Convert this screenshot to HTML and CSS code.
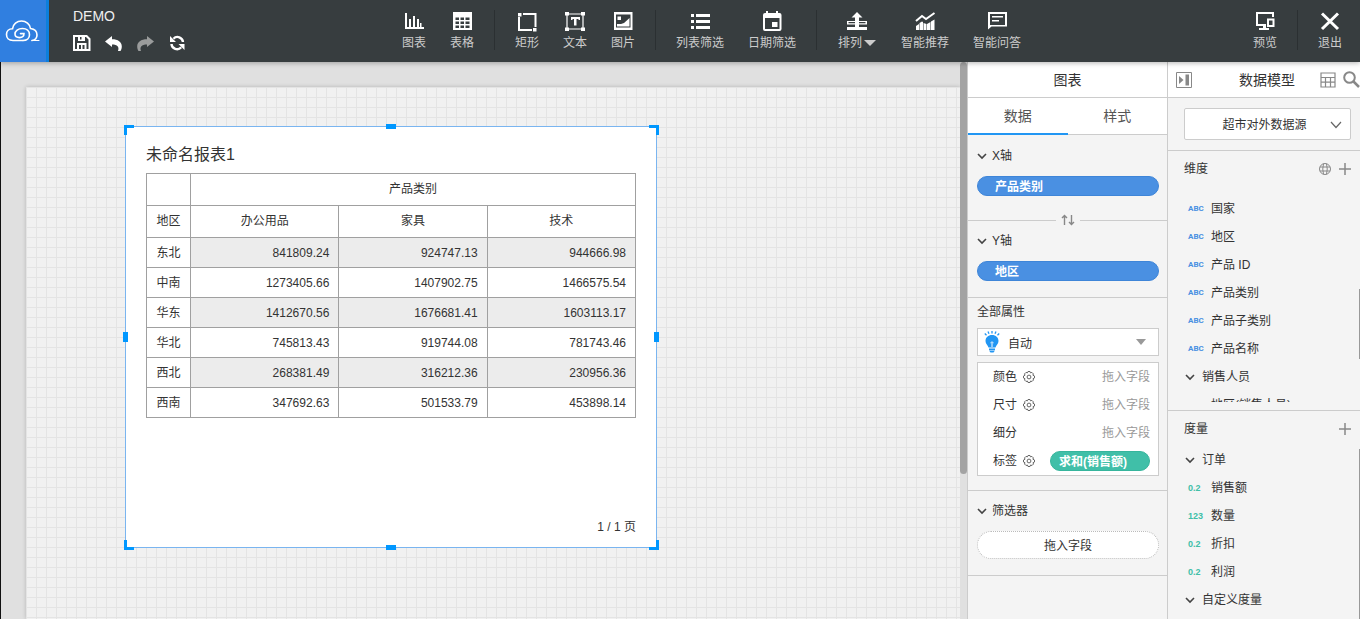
FILE: index.html
```html
<!DOCTYPE html>
<html lang="zh-CN">
<head>
    <meta charset="UTF-8">
    <meta name="viewport" content="width=device-width, initial-scale=1.0">
    <title>DEMO</title>
    <link rel="stylesheet" href="styles.css">
</head>
<body>
    <header class="topbar">
        <a class="logo" href="#" aria-label="Home">
            <svg width="35" height="22" viewBox="0 0 35 22" fill="none" stroke="#fff" stroke-width="1.6" stroke-linecap="round">
                <path d="M18 20.500H8C3.500 20.500 1.500 17.500 1.500 14.500 1.500 11 4 8.800 7.500 8.800 8 4 12 1 16.500 1S25 4 25.500 8.500C29.500 9 32 11.500 32 15c0 3-2 5-5 5.500"/>
                <path stroke-width="1" d="M27 20.500h7"/>
                <path d="M18 20.500c4 0 6.500-2.500 6.500-5.700 0-3.800-3-6.300-7-6.300-4.500 0-7.500 2.500-7.500 5.500 0 2.500 2 3.600 4.500 3.600 2.700 0 4.500-1.300 4.500-4h-3.500"/>
            </svg>
        </a>
        <div class="project">
            <h1>DEMO</h1>
            <div class="history">
                <button type="button" aria-label="保存">
                    <svg width="18" height="18" viewBox="0 0 18 18"><path fill="#fff" fill-rule="evenodd" d="M0 1h14l3.500 3.500V17H0zM2 3v12h2V9h9.500v6h2V5.500L13 3h-1v4H5V3zM7 3v2.500h1.500V3zM6 11v4h2v-4zM9.500 11v4h2v-4z"/></svg>
                </button>
                <button type="button" aria-label="撤销">
                    <svg width="18" height="18" viewBox="0 0 18 18"><path fill="#fff" d="M0 7.500L7 2v3.300c6 0 9.800 2.700 9.800 7.200 0 1.800-.5 3.200-1.300 4.500h-2.500c1.500-4-.5-6.500-6-6.500V13z"/></svg>
                </button>
                <button type="button" aria-label="重做" disabled>
                    <svg width="18" height="18" viewBox="0 0 18 18"><path fill="#9a9c9c" d="M17 7.500L10 2v3.300C4 5.300.2 8 .2 12.500c0 1.800.5 3.200 1.300 4.500H4c-1.500-4 .5-6.500 6-6.500V13z"/></svg>
                </button>
                <button type="button" aria-label="刷新">
                    <svg width="18" height="18" viewBox="0 0 18 18"><g fill="none" stroke="#fff" stroke-width="2.400"><path d="M14 8A5.500 5.500 0 0 0 4.500 4.700"/><path d="M2.500 10a5.500 5.500 0 0 0 9.700 3.300"/></g><path fill="#fff" d="M1 2v6h6zM15.500 16v-6h-6z"/></svg>
                </button>
            </div>
        </div>
        <nav class="tools">
            <button type="button" class="tool">
                <svg width="20" height="20" viewBox="0 0 20 20"><path fill="#fff" d="M1 1h2v14h17v2H1zM5 7h2v8H5zM9 4h2v11H9zM13 7h2v8h-2zM16 11h1.500v4H16z"/></svg>
                <span>图表</span>
            </button>
            <button type="button" class="tool">
                <svg width="20" height="20" viewBox="0 0 20 20"><path fill="#fff" fill-rule="evenodd" d="M1 0h19v18H1zM3.500 5.500v2.500h3.500V5.500zM8.500 5.500v2.500H12V5.500zM13.500 5.500v2.500H17.500V5.500zM3.500 9.500V12H7V9.500zM8.500 9.500V12H12V9.500zM13.500 9.500V12h4V9.500zM3.500 13.500V16H7v-2.500zM8.500 13.500V16H12v-2.500zM13.500 13.500V16h4v-2.500z"/></svg>
                <span>表格</span>
            </button>
            <i class="sep"></i>
            <button type="button" class="tool">
                <svg width="20" height="20" viewBox="0 0 20 20"><path fill="none" stroke="#fff" stroke-width="2" d="M6 2h12.500v13M2 5v13h13"/><path fill="#fff" d="M1 1h3.500v3.500H1zM16 16h3.500v3.500H16z"/></svg>
                <span>矩形</span>
            </button>
            <button type="button" class="tool">
                <svg width="22" height="20" viewBox="0 0 22 20"><path fill="none" stroke="#fff" stroke-width="1.200" d="M3 2h16v15H3z"/><path fill="#fff" d="M1 0h4v3.500H1zM17 0h4v3.500h-4zM1 15.500h4V19H1zM17 15.500h4V19h-4zM7 5h9v3h-1.500V7h-2v6.500h-2.500V7H8.500v1H7z"/></svg>
                <span>文本</span>
            </button>
            <button type="button" class="tool">
                <svg width="20" height="20" viewBox="0 0 20 20"><path fill="#fff" fill-rule="evenodd" d="M1 0h18.500v18H1zM3 2.500v13h14.500v-13zM4.500 4.500H8V8H4.500zM4 14.500V12h4l3-1 5.500-5v8.500z"/></svg>
                <span>图片</span>
            </button>
            <i class="sep"></i>
            <button type="button" class="tool">
                <svg width="20" height="20" viewBox="0 0 20 20"><path fill="#fff" d="M1 2h3v3H1zM6 2h14v3H6zM1 8h3v3H1zM6 8h14v3H6zM1 14h3v3H1zM6 14h14v3H6z"/></svg>
                <span>列表筛选</span>
            </button>
            <button type="button" class="tool">
                <svg width="20" height="20" viewBox="0 0 20 20"><path fill="#fff" fill-rule="evenodd" d="M4-1h2v2h8v-2h2v2h1.500q2 0 2 2v14q0 2-2 2H3q-2 0-2-2V3q0-2 2-2h1zM3 6v11h14.500V6zM10 10h5.500v5H10z"/></svg>
                <span>日期筛选</span>
            </button>
            <i class="sep"></i>
            <button type="button" class="tool tool-arrange">
                <svg width="22" height="20" viewBox="0 0 22 20"><path fill="#fff" fill-rule="evenodd" d="M11 0l5.500 5.500H13V9h8v3.500h-8V15h8v3H1v-3h8v-2.500H1V9h8V5.500H5.500zM2.500 10v1.200H9V10zM13 10v1.200h6.500V10z"/></svg>
                <span>排列<i class="caret"></i></span>
            </button>
            <button type="button" class="tool">
                <svg width="20" height="20" viewBox="0 0 20 20"><path fill="none" stroke="#fff" stroke-width="2" d="M1 9l6-5 4 3 8.500-6"/><path fill="#fff" d="M1 18v-4l3-2v6zM4.500 18v-7l2.500-1.500 1 .5v8zM8.500 18v-7l3 1V18zM12 18v-6L15.500 10v8zM16 18V9.500L19.500 7.500V18z"/></svg>
                <span>智能推荐</span>
            </button>
            <button type="button" class="tool">
                <svg width="20" height="20" viewBox="0 0 20 20"><path fill="#fff" fill-rule="evenodd" d="M1 0h19v14.500H4.500L1 17.500zM3 2v11h15V2zM5 4h11v1.600H5zM5 8h7v1.600H5z"/></svg>
                <span>智能问答</span>
            </button>
        </nav>
        <div class="actions">
            <button type="button" class="tool">
                <svg width="20" height="20" viewBox="0 0 20 20"><path fill="none" stroke="#fff" stroke-width="2" d="M18 5V1H2v12h9"/><path fill="#fff" fill-rule="evenodd" d="M12 6.500h7.500V15H12zM14 8.500V13h3.500V8.500zM8 14h3v2h3v2H4v-2h4z"/></svg>
                <span>预览</span>
            </button>
            <i class="sep"></i>
            <button type="button" class="tool">
                <svg width="20" height="20" viewBox="0 0 20 20"><path fill="none" stroke="#fff" stroke-width="3" d="M2 1.500l16 15.500M18 1.500L2 17"/></svg>
                <span>退出</span>
            </button>
        </div>
    </header>

    <main class="editor">
        <section class="workspace">
            <div class="board">
                <div class="widget">
                    <i class="handle corner nw"></i><i class="handle n"></i><i class="handle corner ne"></i>
                    <i class="handle w"></i><i class="handle e"></i>
                    <i class="handle corner sw"></i><i class="handle s"></i><i class="handle corner se"></i>
                    <h2>未命名报表1</h2>
                    <table>
                        <colgroup><col class="col-region"><col><col><col></colgroup>
                        <thead>
                            <tr><th></th><th colspan="3">产品类别</th></tr>
                            <tr><th>地区</th><th>办公用品</th><th>家具</th><th>技术</th></tr>
                        </thead>
                        <tbody>
                            <tr><th>东北</th><td>841809.24</td><td>924747.13</td><td>944666.98</td></tr>
                            <tr><th>中南</th><td>1273405.66</td><td>1407902.75</td><td>1466575.54</td></tr>
                            <tr><th>华东</th><td>1412670.56</td><td>1676681.41</td><td>1603113.17</td></tr>
                            <tr><th>华北</th><td>745813.43</td><td>919744.08</td><td>781743.46</td></tr>
                            <tr><th>西北</th><td>268381.49</td><td>316212.36</td><td>230956.36</td></tr>
                            <tr><th>西南</th><td>347692.63</td><td>501533.79</td><td>453898.14</td></tr>
                        </tbody>
                    </table>
                    <p class="pager">1 / 1 页</p>
                </div>
            </div>
        </section>
        <div class="scrollbar"><i></i></div>

        <aside class="panel chart-panel">
            <h2 class="panel-title">图表</h2>
            <div class="tabs">
                <button type="button" class="tab active">数据</button>
                <button type="button" class="tab">样式</button>
            </div>
            <section class="axis">
                <button type="button" class="fold"><svg width="10" height="8" viewBox="0 0 10 8"><path d="M1 2l4 4 4-4"/></svg>X轴</button>
                <button type="button" class="pill">产品类别</button>
            </section>
            <div class="swap">
                <button type="button" aria-label="交换"><svg width="14" height="12" viewBox="0 0 14 12"><path fill="none" stroke="#888" stroke-width="1.400" d="M3.500 11V1.500M1 4l2.500-2.500L6 4M10.500 1v9.500M8 8l2.500 2.500L13 8"/></svg></button>
            </div>
            <section class="axis axis-y">
                <button type="button" class="fold"><svg width="10" height="8" viewBox="0 0 10 8"><path d="M1 2l4 4 4-4"/></svg>Y轴</button>
                <button type="button" class="pill">地区</button>
            </section>
            <section class="attributes">
                <label for="mark">全部属性</label>
                <div class="mark-box">
                    <svg class="bulb" width="16" height="22" viewBox="0 0 16 22"><path fill="#2196f3" d="M8 4c3.800 0 6.500 2.400 6.500 6 0 3-2.500 4.200-3 6.500h-7C4 14.200 1.500 13 1.500 10c0-3.600 2.700-6 6.500-6zM5 17.500h6V19H5zM5 19.500h6L9.500 21.500h-3z"/><path stroke="#2196f3" stroke-width="1.300" d="M8 0v2.500M4 .5l1 2.300M12 .5l-1 2.300M.8 2.500l1.700 1.700M15.200 2.500l-1.700 1.700"/><path fill="none" stroke="#fff" stroke-width="1" d="M8 16v-3.500M7.200 12.500a1 1 0 1 1 1.600 0"/></svg>
                    <select id="mark"><option>自动</option></select>
                </div>
                <ul class="channels">
                    <li>颜色<button type="button" class="gear" aria-label="设置"><svg width="12" height="12" viewBox="0 0 12 12"><use href="#gear"/></svg></button><span>拖入字段</span></li>
                    <li>尺寸<button type="button" class="gear" aria-label="设置"><svg width="12" height="12" viewBox="0 0 12 12"><use href="#gear"/></svg></button><span>拖入字段</span></li>
                    <li>细分<span>拖入字段</span></li>
                    <li>标签<button type="button" class="gear" aria-label="设置"><svg width="12" height="12" viewBox="0 0 12 12"><use href="#gear"/></svg></button><button type="button" class="pill pill-measure">求和(销售额)</button></li>
                </ul>
            </section>
            <section class="filters">
                <button type="button" class="fold"><svg width="10" height="8" viewBox="0 0 10 8"><path d="M1 2l4 4 4-4"/></svg>筛选器</button>
                <div class="drop">拖入字段</div>
            </section>
        </aside>

        <aside class="panel model-panel">
            <div class="panel-title model-title">
                <button type="button" aria-label="收起"><svg width="16" height="16" viewBox="0 0 16 16"><path fill="none" stroke="#888" d="M.5.5h15v15H.5z"/><path fill="#888" d="M3 4l4.500 4L3 12zM9.500 2.500H13v11H9.500z"/></svg></button>
                <h2>数据模型</h2>
                <button type="button" aria-label="表格"><svg width="16" height="16" viewBox="0 0 16 16"><path fill="none" stroke="#888" stroke-width="1.200" d="M1 1h14v14H1zM1 5.500h14M1 10.200h14M5.500 5.500V15M10.500 5.500V15"/></svg></button>
                <button type="button" aria-label="搜索"><svg width="17" height="17" viewBox="0 0 17 17"><circle cx="6.500" cy="6.500" r="5.300" fill="none" stroke="#888" stroke-width="2"/><path stroke="#888" stroke-width="2.500" d="M10.500 10.500l5.500 5.500"/></svg></button>
            </div>
            <div class="source">
                <select aria-label="数据源"><option>超市对外数据源</option></select>
                <svg width="12" height="8" viewBox="0 0 12 8"><path fill="none" stroke="#666" stroke-width="1.200" d="M1 1l5 5.500L11 1"/></svg>
            </div>
            <section class="fields dimensions">
                <header>
                    <h3>维度</h3>
                    <button type="button" aria-label="地理"><svg width="12" height="12" viewBox="0 0 12 12" fill="none" stroke="#888"><circle cx="6" cy="6" r="5.500"/><path d="M4.500.8q-1.500 5.200 0 10.400M7.500.8q1.500 5.200 0 10.400M1 4h10M1 8h10"/></svg></button>
                    <button type="button" aria-label="添加"><svg width="12" height="12" viewBox="0 0 12 12"><path stroke="#888" stroke-width="1.500" d="M6 0v12M0 6h12"/></svg></button>
                </header>
                <ul>
                    <li><b>ABC</b>国家</li>
                    <li><b>ABC</b>地区</li>
                    <li><b>ABC</b>产品 ID</li>
                    <li><b>ABC</b>产品类别</li>
                    <li><b>ABC</b>产品子类别</li>
                    <li><b>ABC</b>产品名称</li>
                    <li><button type="button" class="fold"><svg width="10" height="8" viewBox="0 0 10 8"><path d="M1 2l4 4 4-4"/></svg>销售人员</button></li>
                    <li><b>ABC</b>地区(销售人员)</li>
                </ul>
            </section>
            <section class="fields measures">
                <header>
                    <h3>度量</h3>
                    <button type="button" aria-label="添加"><svg width="12" height="12" viewBox="0 0 12 12"><path stroke="#888" stroke-width="1.500" d="M6 0v12M0 6h12"/></svg></button>
                </header>
                <ul>
                    <li><button type="button" class="fold"><svg width="10" height="8" viewBox="0 0 10 8"><path d="M1 2l4 4 4-4"/></svg>订单</button></li>
                    <li><b>0.2</b>销售额</li>
                    <li><b>123</b>数量</li>
                    <li><b>0.2</b>折扣</li>
                    <li><b>0.2</b>利润</li>
                    <li><button type="button" class="fold"><svg width="10" height="8" viewBox="0 0 10 8"><path d="M1 2l4 4 4-4"/></svg>自定义度量</button></li>
                </ul>
            </section>
        </aside>
    </main>

    <svg class="defs" width="0" height="0" aria-hidden="true">
        <defs>
            <g id="gear" fill="none" stroke="#666">
                <path d="M5 .5h2l.5 1.400 1.400-.5 1.500 1.500-.5 1.300L11.500 5v2l-1.500.7.5 1.300-1.500 1.500-1.400-.5L7 11.500H5l-.6-1.500-1.400.5L1.500 9 2 7.700.5 7V5L2 4.200 1.500 2.900 3 1.400l1.400.5z"/>
                <circle cx="6" cy="6" r="1.900"/>
            </g>
        </defs>
    </svg>
</body>
</html>
```

FILE: styles.css
```css
* {
    box-sizing: border-box;
}
body {
    display: flex;
    flex-direction: column;
    height: 100vh;
    margin: 0;
    overflow: hidden;
    font-family: "Liberation Sans", "Noto Sans CJK SC", sans-serif;
    font-size: 12px;
    line-height: 16px;
    color: #333;
    background-color: #e0e0e0;
}
h1, h2, h3, p, ul {
    margin: 0;
    padding: 0;
    font-weight: normal;
}
ul {
    list-style: none;
}
button {
    padding: 0;
    border: none;
    background: none;
    font: inherit;
    color: inherit;
    cursor: pointer;
}
button svg {
    display: block;
}
.defs {
    position: absolute;
}

/* top bar */
.topbar {
    display: flex;
    flex: none;
    height: 62px;
    padding-right: 6px;
    background-color: #373d3f;
    box-shadow: 0 1px 5px rgba(0, 0, 0, 0.3);
    position: relative;
    z-index: 2;
}
.logo {
    display: flex;
    align-items: center;
    width: 49px;
    padding-left: 5px;
    border-right: 3px solid #0d7fdc;
    background-color: #307fe0;
}
.project {
    width: 133px;
    padding: 8px 0 0 24px;
}
.project h1 {
    font-size: 14px;
    line-height: 16px;
    color: #f0f0f0;
}
.history {
    display: flex;
    gap: 14px;
    margin-top: 10px;
}
.history button {
    flex: none;
}
.tools,
.actions {
    display: flex;
}
.tools {
    margin: 0 auto;
}
.tool {
    flex: none;
    padding: 12px 12px 0;
    color: #ccc;
    display: flex;
    flex-direction: column;
    align-items: center;
    gap: 3px;
    white-space: nowrap;
}
.tool svg {
    overflow: visible;
}
.tool span {
    display: flex;
    align-items: center;
}
.tool-arrange {
    width: 64px;
}
.caret {
    margin-left: 2px;
    border: 6px solid transparent;
    border-top: 6px solid #ccc;
    border-bottom: 0;
}
.sep {
    width: 1px;
    height: 40px;
    margin: 10px 8px;
    background-color: #2b3032;
}

/* canvas */
.editor {
    display: flex;
    flex: 1;
    min-height: 0;
}
.workspace {
    display: flex;
    flex: 1;
    padding: 25px 0 0 25px;
    border-left: 1px solid #111;
    overflow: hidden;
}
.board {
    position: relative;
    flex: 1;
    background-color: #f1f1f1;
    background-image: linear-gradient(#e4e4e4 1px, transparent 1px), linear-gradient(90deg, #e4e4e4 1px, transparent 1px);
    background-size: 10px 10px;
    box-shadow: 0 0 4px rgba(0, 0, 0, 0.2);
}
.widget {
    position: absolute;
    left: 99px;
    top: 39px;
    display: flex;
    flex-direction: column;
    width: 532px;
    height: 422px;
    padding: 16px 20px 12px;
    border: 1px solid #7ab5f0;
    background-color: #fff;
}
.widget h2 {
    font-size: 16px;
    line-height: 24px;
    margin-bottom: 6px;
}
.widget table {
    width: 100%;
    table-layout: fixed;
    border-collapse: collapse;
}
.col-region {
    width: 44px;
}
.widget th,
.widget td {
    height: 30px;
    padding: 0;
    border: 1px solid #a0a0a0;
    font-weight: normal;
    text-align: center;
}
.widget thead th {
    height: 32px;
    padding-bottom: 2px;
}
.widget td {
    padding-right: 9px;
    text-align: right;
}
.widget tbody tr:nth-child(odd) td {
    background-color: #ececec;
}
.pager {
    margin-top: auto;
    text-align: right;
}
.handle {
    position: absolute;
    width: 10px;
    height: 5px;
    background-color: #0097ff;
}
.n, .s {
    left: calc(50% - 5px);
}
.n {
    top: -3px;
}
.s {
    bottom: -3px;
}
.w, .e {
    top: calc(50% - 5px);
    width: 5px;
    height: 10px;
}
.w {
    left: -3px;
}
.e {
    right: -3px;
}
.corner {
    width: 10px;
    height: 10px;
    border: 0 solid #0097ff;
    background: none;
}
.nw {
    left: -2px;
    top: -2px;
    border-width: 3px 0 0 3px;
}
.ne {
    right: -3px;
    top: -2px;
    border-width: 3px 3px 0 0;
}
.sw {
    left: -2px;
    bottom: -3px;
    border-width: 0 0 3px 3px;
}
.se {
    right: -3px;
    bottom: -3px;
    border-width: 0 3px 3px 0;
}
.scrollbar {
    width: 7px;
}
.scrollbar i {
    display: block;
    height: 74%;
    border-radius: 4px;
    background-color: #a3a3a3;
}

/* side panels */
.panel {
    display: flex;
    flex-direction: column;
    flex: none;
    background-color: #f4f4f4;
}
.panel section {
    border-bottom: 1px solid #ccc;
}
.panel-title {
    flex: none;
    height: 36px;
    border-bottom: 1px solid #ccc;
    background-color: #fff;
    font-size: 14px;
    line-height: 36px;
    text-align: center;
}
.chart-panel {
    width: 201px;
    border: 1px solid #ccc;
    border-width: 0 1px;
}
.tabs {
    display: flex;
    height: 37px;
    background-color: #fff;
}
.tab {
    flex: 1;
    border-bottom: 1px solid #ccc;
    font-size: 14px;
    color: #555;
}
.tab.active {
    border-bottom: 2px solid #2196f3;
}
.fold {
    display: flex;
    align-items: center;
    gap: 5px;
}
.fold path {
    fill: none;
    stroke: #444;
    stroke-width: 1.6px;
}
.pill {
    display: block;
    width: 100%;
    height: 20px;
    padding: 1px 17px 0;
    border: 1px solid #3e85d8;
    border-radius: 10px;
    background-color: #4a90e2;
    color: #fff;
    font-weight: bold;
    line-height: 18px;
    text-align: left;
}
.panel .axis {
    padding: 13px 8px 15px 9px;
    border-bottom: none;
}
.axis .pill {
    margin-top: 12px;
}
.swap {
    display: flex;
    align-items: center;
    gap: 5px;
    height: 18px;
}
.swap::before,
.swap::after {
    content: "";
    flex: 1;
    border-top: 1px solid #ccc;
}
.panel .axis-y {
    padding-top: 4px;
    padding-bottom: 16px;
    border-bottom: 1px solid #ccc;
}
.attributes {
    padding: 6px 8px 14px 9px;
}
.mark-box {
    position: relative;
    margin-top: 8px;
}
.attributes label {
    display: block;
}
.bulb {
    position: absolute;
    left: 7px;
    top: 3px;
}
select {
    display: block;
    width: 100%;
    border: 1px solid #ccc;
    background-color: #fff;
    font: inherit;
    color: inherit;
    appearance: none;
}
#mark {
    height: 28px;
    padding: 3px 30px 0;
}
.mark-box::after {
    content: "";
    position: absolute;
    right: 13px;
    top: 11px;
    border: 5px solid transparent;
    border-top: 6px solid #999;
    border-bottom: 0;
}
.channels {
    margin-top: 6px;
    padding: 0 8px 0 15px;
    border: 1px solid #ccc;
    background-color: #fff;
}
.channels li {
    display: flex;
    align-items: center;
    height: 28px;
}
.channels span {
    margin-left: auto;
    color: #999;
}
.gear {
    margin-left: 6px;
}
.pill-measure {
    width: 100px;
    margin-left: auto;
    padding: 1px 8px 0;
    border-color: #36b59c;
    background-color: #40bfa8;
}
.filters {
    padding: 12px 8px 16px 9px;
}
.drop {
    height: 28px;
    margin-top: 12px;
    border: 1px dotted #bbb;
    border-radius: 14px;
    background-color: #fff;
    line-height: 28px;
    text-align: center;
}

/* data model */
.model-panel {
    width: 192px;
}
.model-title {
    display: flex;
    align-items: center;
    gap: 7px;
    padding: 0 0 0 8px;
}
.model-title h2 {
    flex: 1;
    padding-left: 22px;
    font-size: 14px;
}
.source {
    position: relative;
    padding: 10px 9px 10px 16px;
    border-bottom: 1px solid #ccc;
}
.source select {
    height: 32px;
    padding: 2px 10px 0 4px;
    border-radius: 2px;
    text-align-last: center;
}
.source svg {
    position: absolute;
    right: 18px;
    top: 23px;
}
.fields {
    position: relative;
    display: flex;
    flex-direction: column;
    min-height: 0;
}
.dimensions {
    flex: 5;
}
.measures {
    flex: 4;
}
.panel .measures {
    border-bottom: none;
}
.fields header {
    display: flex;
    flex: none;
    align-items: center;
    gap: 8px;
    height: 35px;
    padding: 0 9px 0 16px;
}
.fields h3 {
    flex: 1;
    font-size: 12px;
}
.fields ul {
    flex: 1;
    overflow: hidden;
}
.dimensions ul {
    margin-bottom: 8px;
    padding-top: 9px;
}
.fields li {
    display: flex;
    align-items: center;
    height: 28px;
    padding-left: 17px;
}
.fields .fold {
    gap: 7px;
}
.fields b {
    width: 26px;
    padding-left: 3px;
    font-family: "Liberation Sans Narrow", Roboto, sans-serif;
    font-size: 8px;
    color: #4a90e2;
}
.measures b {
    font-family: "Liberation Sans", sans-serif;
    font-size: 9px;
    color: #40bfa8;
}
.fields::after {
    content: "";
    position: absolute;
    right: 0;
    top: 53%;
    width: 1px;
    height: 27%;
    background-color: #999;
}
.measures::after {
    top: 38px;
    height: auto;
    bottom: 0;
}
```
